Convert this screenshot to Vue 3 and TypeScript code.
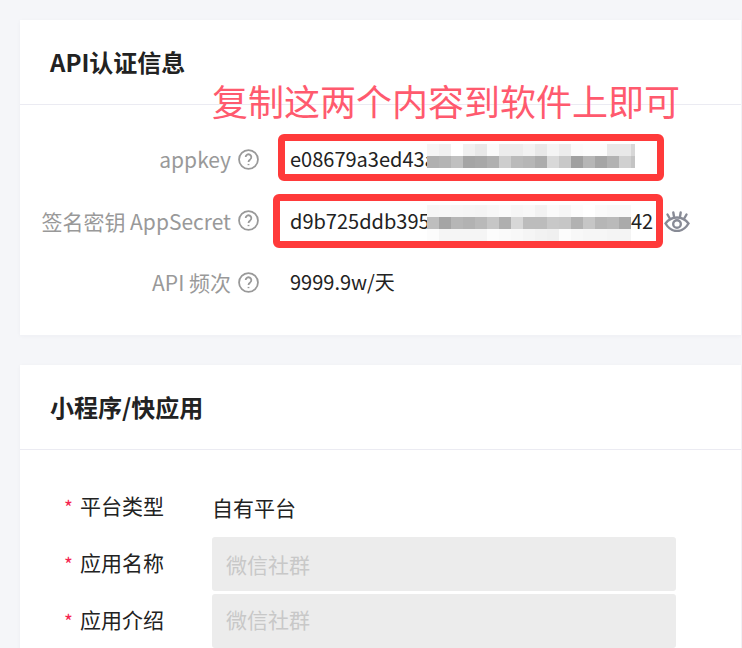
<script setup lang="ts">
const cell = (values: number[]) => values.map((v) => `rgb(${v},${v},${v})`)
const keyRows = [
  cell([245, 240, 255, 240, 232, 250, 236, 236, 242, 232, 244, 236, 250, 252, 252, 232, 232, 215]),
  cell([176, 180, 192, 165, 168, 176, 205, 186, 182, 172, 216, 200, 160, 182, 165, 178, 208, 196]),
]
const secretRows = [
  cell([246, 247, 246, 245, 244, 247, 250, 246, 248, 242, 250, 246, 252, 255, 250, 248, 248]),
  cell([190, 165, 182, 178, 185, 198, 175, 215, 188, 188, 200, 198, 178, 198, 182, 186, 170]),
  cell([252, 245, 245, 245, 245, 252, 250, 248, 245, 242, 240, 252, 248, 246, 246, 244, 244]),
]
</script>

<template>
  <main class="page">
    <section class="card">
      <h2 class="card-title">API认证信息</h2>
      <div class="auth-body">
        <div class="auth-row">
          <span class="auth-label">appkey</span>
          <svg class="help" viewBox="0 0 20 20"><circle cx="10" cy="10" r="9" /><path d="M7.3 7.7a2.7 2.7 0 1 1 4.3 2.2c-1 .7-1.6 1.2-1.6 2.4" /><path d="M10 14.2v1.2" /></svg>
          <span class="auth-value">
            e08679a3ed43a
            <span class="mosaic mosaic-key">
              <span v-for="(row, r) in keyRows" :key="r" class="mosaic-row">
                <i v-for="(c, i) in row" :key="i" :style="{ background: c }"></i>
              </span>
            </span>
          </span>
        </div>
        <div class="auth-row">
          <span class="auth-label">签名密钥 AppSecret</span>
          <svg class="help" viewBox="0 0 20 20"><circle cx="10" cy="10" r="9" /><path d="M7.3 7.7a2.7 2.7 0 1 1 4.3 2.2c-1 .7-1.6 1.2-1.6 2.4" /><path d="M10 14.2v1.2" /></svg>
          <span class="auth-value">
            d9b725ddb395
            <span class="tail">42</span>
            <span class="mosaic mosaic-secret">
              <span v-for="(row, r) in secretRows" :key="r" class="mosaic-row">
                <i v-for="(c, i) in row" :key="i" :style="{ background: c }"></i>
              </span>
            </span>
          </span>
          <svg class="eye" viewBox="0 0 26 22">
            <path d="M1.5 13.500C4.5 9.500 8.500 7.500 13 7.500s8.500 2 11.500 6C21.500 18.500 17.500 21 13 21S4.500 18.500 1.500 13.500Z" />
            <circle cx="13" cy="14" r="3.800" />
            <path d="M5.500 8 3.500 4.500M10 6.500 9.300 2.500M16 6.500l.7-4M20.500 8l2-3.500" />
          </svg>
        </div>
        <div class="auth-row">
          <span class="auth-label">API 频次</span>
          <svg class="help" viewBox="0 0 20 20"><circle cx="10" cy="10" r="9" /><path d="M7.3 7.7a2.7 2.7 0 1 1 4.3 2.2c-1 .7-1.6 1.2-1.6 2.4" /><path d="M10 14.2v1.2" /></svg>
          <span class="auth-value">9999.9w/天</span>
        </div>
      </div>
      <div class="note">复制这两个内容到软件上即可</div>
      <div class="ring ring-key"></div>
      <div class="ring ring-secret"></div>
    </section>

    <section class="card card-form">
      <h2 class="card-title">小程序/快应用</h2>
      <div class="form-body">
        <div class="form-row">
          <label class="form-label">平台类型</label>
          <span class="form-text">自有平台</span>
        </div>
        <div class="form-row">
          <label class="form-label">应用名称</label>
          <div class="form-input">微信社群</div>
        </div>
        <div class="form-row">
          <label class="form-label">应用介绍</label>
          <div class="form-input form-area">微信社群</div>
        </div>
      </div>
    </section>
  </main>
</template>

<style>
html,
body {
  margin: 0;
  background: #f5f6f9;
}
</style>

<style scoped>
.page {
  box-sizing: border-box;
  width: 742px;
  height: 648px;
  overflow: hidden;
  padding: 20px 1px 0 20px;
  display: flex;
  flex-direction: column;
  gap: 30px;
  background: #f5f6f9;
  font-family: "Noto Sans CJK SC", "Noto Sans", sans-serif;
}

.card {
  position: relative;
  flex: none;
  background: #fff;
  height: 315px;
  box-shadow: 0 1px 4px rgba(40, 50, 90, 0.04);
}

.card-form {
  height: 400px;
}

.card-title {
  box-sizing: border-box;
  height: 85px;
  margin: 0;
  padding: 0 30px 2px;
  display: flex;
  align-items: center;
  border-bottom: 1px solid #ebebf2;
  font-size: 24px;
  font-weight: 700;
  color: #222;
}

.auth-body {
  padding-top: 29px;
  display: flex;
  flex-direction: column;
  gap: 11.500px;
}

.auth-row {
  height: 50px;
  display: flex;
  align-items: center;
}

.auth-label {
  width: 211px;
  text-align: right;
  font-size: 21px;
  color: #999;
  white-space: nowrap;
}

.help {
  width: 21px;
  height: 21px;
  margin-left: 7px;
  flex: none;
  fill: none;
  stroke: #999;
  stroke-width: 1.700;
}

.auth-value {
  position: relative;
  margin-left: 31px;
  font-size: 20px;
  line-height: 28px;
  color: #222;
  white-space: nowrap;
}

.mosaic {
  position: absolute;
  left: 137px;
  width: 208px;
  overflow: hidden;
  display: flex;
  flex-direction: column;
}

.mosaic-key {
  top: -1px;
}

.mosaic-secret {
  top: -2px;
}

.mosaic-row {
  display: flex;
  height: 12px;
}

.mosaic-row i {
  display: block;
  flex: none;
  width: 12px;
  height: 12px;
}

.tail {
  position: absolute;
  left: 341px;
  top: 0;
}

.eye {
  position: absolute;
  left: 644px;
  width: 26px;
  height: 22px;
  fill: none;
  stroke: #888b96;
  stroke-width: 2.400;
  stroke-linecap: round;
}

.note {
  position: absolute;
  left: 192px;
  top: 56px;
  font-size: 36px;
  font-weight: 400;
  line-height: 48px;
  color: #ff5a6e;
  white-space: nowrap;
}

.ring {
  position: absolute;
  box-sizing: border-box;
  border: 7px solid #ff3a3a;
  border-radius: 6px;
}

.ring-key {
  left: 258px;
  top: 114px;
  width: 386px;
  height: 47px;
}

.ring-secret {
  left: 253px;
  top: 174px;
  width: 390px;
  height: 54px;
}

.form-body {
  padding: 30px 0 0 44px;
  display: flex;
  flex-direction: column;
  gap: 3px;
}

.form-row {
  height: 54px;
  display: flex;
  align-items: center;
}

.form-label {
  width: 148px;
  flex: none;
  padding-left: 16px;
  margin-top: -4px;
  box-sizing: border-box;
  position: relative;
  font-size: 21px;
  color: #222;
}

.form-label::before {
  content: "*";
  position: absolute;
  left: 0;
  top: 3px;
  color: #f5254f;
  font-size: 19px;
}

.form-text {
  font-size: 21px;
  color: #222;
}

.form-input {
  box-sizing: border-box;
  width: 464px;
  height: 54px;
  padding-left: 14px;
  display: flex;
  align-items: center;
  background: #ececec;
  border-radius: 3px;
  font-size: 21px;
  color: #c8c8c8;
}

.form-area {
  padding-bottom: 5px;
}
</style>
